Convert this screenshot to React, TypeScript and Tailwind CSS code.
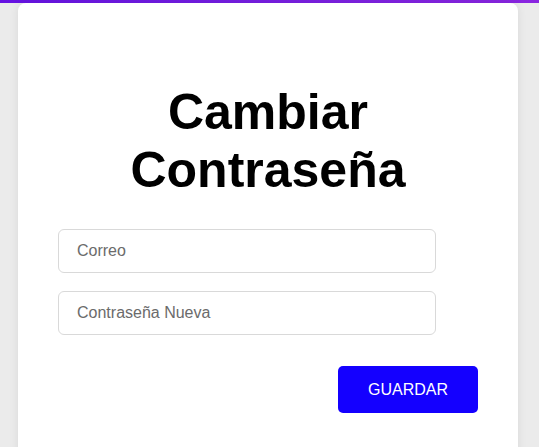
import React from "react";

export default function App() {
  return (
    <div
      className="min-h-[447px] bg-[#ebebeb]"
      style={{ fontFamily: '"Liberation Sans", Arial, sans-serif' }}
    >
      <div className="h-[3px] bg-gradient-to-r from-[#6512e2] to-[#8a25e0]" />
      <div className="ml-[18px] w-[500px] min-h-[460px] rounded-t-lg bg-white px-10 pt-[81px] pb-10 shadow-[0_0_10px_rgba(0,0,0,0.08)]">
        <h1 className="text-center text-[50px] font-bold leading-[57.5px] text-black">
          Cambiar
          <br />
          Contraseña
        </h1>
        <div className="mt-[30px] flex flex-col gap-[18px]">
          <input
            type="email"
            placeholder="Correo"
            className="h-[44px] w-[378px] rounded-md border border-[#d9d9d9] bg-white px-[18px] text-base text-black outline-none placeholder:text-[#6b6b6b]"
          />
          <input
            type="password"
            placeholder="Contraseña Nueva"
            className="h-[44px] w-[378px] rounded-md border border-[#d9d9d9] bg-white px-[18px] text-base text-black outline-none placeholder:text-[#6b6b6b]"
          />
        </div>
        <div className="mt-[31px] flex justify-end">
          <button className="h-[47px] w-[140px] rounded-[5px] bg-[#1400ff] text-base text-white">
            GUARDAR
          </button>
        </div>
      </div>
    </div>
  );
}
